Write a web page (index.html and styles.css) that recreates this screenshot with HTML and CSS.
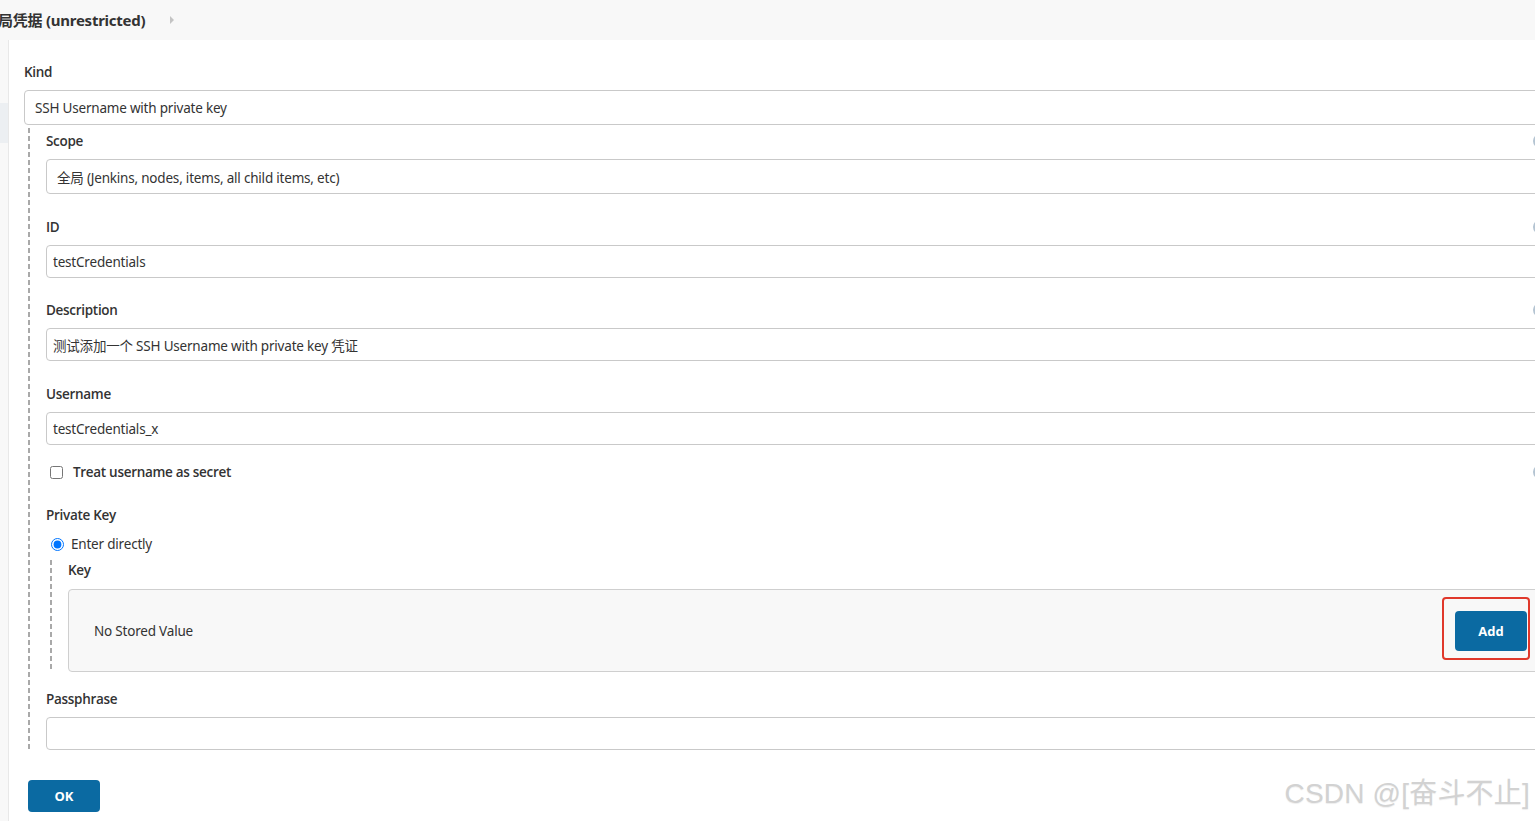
FILE: index.html
```html
<!DOCTYPE html>
<html lang="zh-CN">
<head>
<meta charset="utf-8">
<title>Credentials</title>
<link rel="stylesheet" href="styles.css">
</head>
<body>
<header class="topbar">
  <span class="crumb">局凭据 (unrestricted)</span>
  <span class="crumb-arrow"></span>
</header>
<div class="page">
  <aside class="sidebar">
    <div class="side-item"></div>
    <div class="side-item active"></div>
  </aside>
  <main class="main">
    <div class="field kind">
      <div class="label-row"><label>Kind</label></div>
      <div class="select">SSH Username with private key</div>
    </div>
    <div class="nested">
      <div class="field">
        <div class="label-row"><label>Scope</label><span class="help"></span></div>
        <div class="select">全局 (Jenkins, nodes, items, all child items, etc)</div>
      </div>
      <div class="field f22">
        <div class="label-row"><label>ID</label><span class="help"></span></div>
        <input class="input" type="text" value="testCredentials">
      </div>
      <div class="field">
        <div class="label-row"><label>Description</label><span class="help"></span></div>
        <input class="input" type="text" value="测试添加一个 SSH Username with private key 凭证">
      </div>
      <div class="field f17">
        <div class="label-row"><label>Username</label></div>
        <input class="input" type="text" value="testCredentials_x">
      </div>
      <div class="check-row">
        <label class="check"><input type="checkbox"><span>Treat username as secret</span></label>
        <span class="help"></span>
      </div>
      <div class="field pk">
        <div class="label-row"><label>Private Key</label></div>
        <label class="radio"><input type="radio" name="pk" checked><span>Enter directly</span></label>
        <div class="nested inner">
          <div class="label-row"><label>Key</label></div>
          <div class="keybox">
            <span>No Stored Value</span>
            <button class="btn add" type="button">Add</button>
          </div>
        </div>
      </div>
      <div class="field last">
        <div class="label-row"><label>Passphrase</label></div>
        <input class="input" type="password" value="">
      </div>
    </div>
    <button class="btn ok" type="button">OK</button>
  </main>
</div>
<div class="watermark">CSDN @[奋斗不止]</div>
</body>
</html>
```

FILE: styles.css
```css
html, body {
  margin: 0;
  padding: 0;
  overflow: hidden;
  background: #fff;
}
body {
  font-family: "Noto Sans", "Noto Sans CJK SC", sans-serif;
  font-size: 13.5px;
  letter-spacing: -0.2px;
  color: #333;
  width: 1535px;
  height: 821px;
  position: relative;
}
.topbar {
  height: 40px;
  width: 1555px;
  background: #f8f8f8;
  display: flex;
  align-items: center;
}
.crumb {
  font-weight: 700;
  font-size: 15px;
  letter-spacing: -0.25px;
  margin-left: -2px;
  margin-top: -1px;
  color: #333;
}
.crumb-arrow {
  width: 0;
  height: 0;
  border-left: 4px solid #c4c4c4;
  border-top: 4px solid transparent;
  border-bottom: 4px solid transparent;
  margin-left: 25px;
}
.page {
  display: flex;
  width: 1555px;
  height: 781px;
}
.sidebar {
  width: 8px;
  flex: none;
  background: #f8f8f8;
  border-right: 1px solid #e8e8e8;
  padding-top: 63px;
}
.side-item.active {
  height: 40px;
  background: #eceff2;
}
.main {
  flex: 1;
  padding: 22px 8px 0 15px;
}
.field {
  margin-bottom: 23px;
}
.field.kind {
  margin-bottom: 0;
}
.field.f22 {
  margin-bottom: 22px;
}
.field.f17 {
  margin-bottom: 17px;
}
.field.last {
  margin-bottom: 0;
}
.label-row {
  display: flex;
  justify-content: space-between;
  align-items: center;
  height: 20px;
  margin-bottom: 8px;
}
.label-row label,
.check span {
  font-family: "Open Sans", "Noto Sans", "Noto Sans CJK SC", sans-serif;
  font-weight: 600;
  font-size: 13.5px;
  letter-spacing: -0.3px;
  line-height: 20px;
}
.help {
  width: 14px;
  height: 14px;
  border-radius: 50%;
  background: #b4c4d2;
  flex: none;
}
.select {
  height: 35px;
  box-sizing: border-box;
  border: 1px solid #c9c9c9;
  border-radius: 4px;
  padding: 0 10px;
  display: flex;
  align-items: center;
}
.input {
  display: block;
  width: 100%;
  height: 33px;
  box-sizing: border-box;
  border: 1px solid #c9c9c9;
  border-radius: 4px;
  padding: 0 6px;
  margin: 0;
  font: inherit;
  letter-spacing: inherit;
  color: #333;
  background: #fff;
  outline: none;
}
.nested {
  margin-left: 4px;
  padding-left: 18px;
  padding-top: 6px;
  background-image: linear-gradient(#a9a9a9 5px, transparent 5px);
  background-size: 2px 8px;
  background-repeat: repeat-y;
  background-position: 0 3px;
}
.check-row {
  height: 20px;
  display: flex;
  justify-content: space-between;
  align-items: center;
  margin-bottom: 23px;
}
.check, .radio {
  display: flex;
  align-items: center;
  height: 20px;
}
.check input {
  margin: 0 0 0 4px;
  width: 13px;
  height: 13px;
}
.check span {
  margin-left: 10px;
}
.pk .label-row {
  margin-bottom: 9px;
}
.radio input {
  margin: 0 0 0 5px;
  width: 13px;
  height: 13px;
}
.radio span {
  margin-left: 7px;
}
.nested.inner {
  margin-top: 6px;
  padding-top: 0;
  background-position: 0 0;
}
.keybox {
  height: 83px;
  box-sizing: border-box;
  background: #f8f8f8;
  border: 1px solid #cfcfcf;
  border-radius: 4px;
  display: flex;
  align-items: center;
  justify-content: space-between;
  padding: 0 19px 0 25px;
}
.field.pk {
  margin-bottom: 17px;
}
.btn {
  background: #0b6aa2;
  color: #fff;
  border: none;
  border-radius: 4px;
  font-family: "Open Sans", "Noto Sans", sans-serif;
  font-weight: 700;
  font-size: 13px;
  letter-spacing: 0;
  padding: 0;
}
.btn.add {
  width: 72px;
  height: 40px;
  position: relative;
}
.btn.add::after {
  content: "";
  position: absolute;
  top: -14px;
  left: -13px;
  right: -3px;
  bottom: -9px;
  border: 2px solid #e0382b;
  border-radius: 4px;
}
.btn.ok {
  display: block;
  width: 72px;
  height: 32px;
  margin: 30px 0 0 4px;
}
.watermark {
  position: absolute;
  right: 5px;
  top: 780px;
  font-family: "Liberation Sans", "Noto Sans CJK SC", sans-serif;
  font-size: 28px;
  line-height: 28px;
  letter-spacing: 0.2px;
  color: #d2d2d2;
  text-shadow: 0 1px 1px rgba(0, 0, 0, 0.07);
  white-space: nowrap;
}
```
